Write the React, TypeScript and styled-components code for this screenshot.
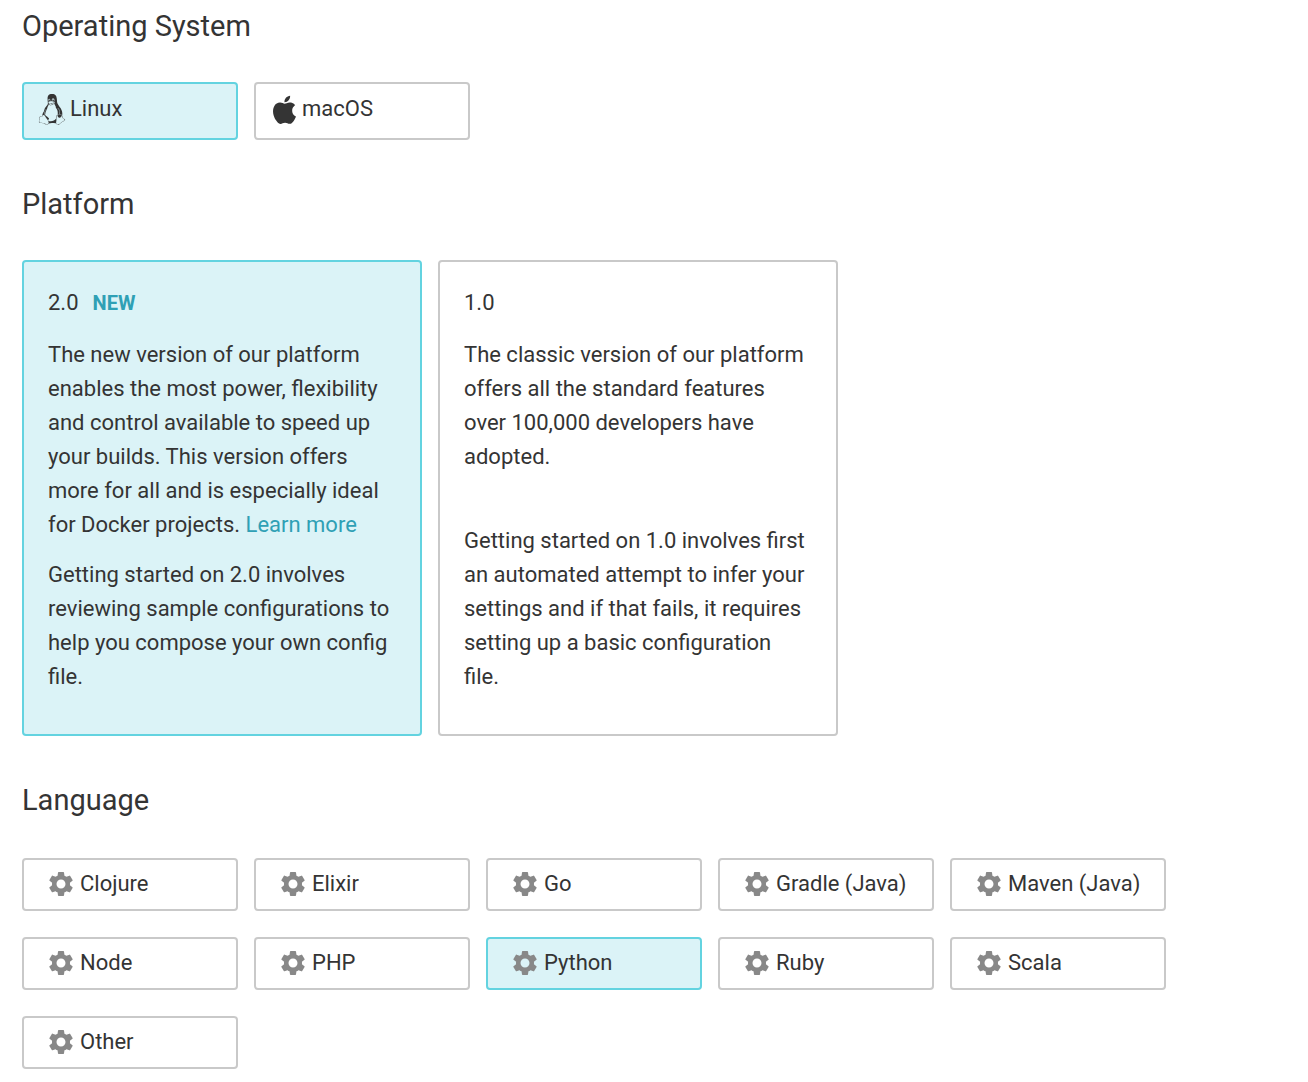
import React, { useState } from 'react';
import styled, { createGlobalStyle } from 'styled-components';
import { DiApple, DiLinux } from 'react-icons/di';
import { MdSettings } from 'react-icons/md';

const GlobalStyle = createGlobalStyle`
  *, *::before, *::after { box-sizing: border-box; }
  body {
    margin: 0;
    background: #fff;
    color: #343434;
    font-family: Roboto, "Liberation Sans", sans-serif;
    font-size: 22px;
    line-height: 34px;
  }
`;

const Page = styled.main`
  display: flex;
  flex-direction: column;
  gap: 44px;
  padding: 6px 22px 14px;
`;

const Section = styled.section<{ $gap?: number }>`
  display: flex;
  flex-direction: column;
  gap: ${(p) => p.$gap ?? 36}px;
`;

const Heading = styled.h2`
  margin: 0;
  font-size: 29px;
  font-weight: 400;
  line-height: 40px;
`;

const Grid = styled.div<{ $column: number }>`
  display: grid;
  grid-template-columns: repeat(auto-fill, ${(p) => p.$column}px);
  column-gap: 16px;
  row-gap: 26px;
`;

const Radio = styled.input`
  position: absolute;
  width: 1px;
  height: 1px;
  margin: 0;
  opacity: 0;
`;

const Option = styled.label`
  border: 2px solid #c9c9c9;
  border-radius: 4px;
  background: #fff;
  cursor: pointer;

  &:has(input:checked) {
    border-color: #63d3e0;
    background: #dbf3f7;
  }
`;

const SystemOption = styled(Option)`
  display: flex;
  align-items: center;
  height: 58px;
  padding: 0 10px 4px;
`;

const IconSlot = styled.span`
  display: flex;
  flex: none;
  align-items: center;
  justify-content: center;
  width: 36px;
`;

const LanguageOption = styled(Option)`
  display: flex;
  align-items: center;
  gap: 4px;
  height: 53px;
  padding: 0 10px 2px 22px;

  svg {
    flex: none;
    fill: #888;
  }
`;

const Card = styled(Option)`
  padding: 24px 28px 24px 24px;
`;

const CardTitle = styled.p`
  margin: 0 0 18px;
`;

const CardText = styled.p`
  margin: 0 0 16px;
`;

const Badge = styled.strong`
  margin-left: 14px;
  color: #2fa0b5;
  font-size: 20px;
  font-weight: 700;
`;

const Link = styled.a`
  color: #2fa0b5;
  text-decoration: none;
`;

const systems = [
  { name: 'Linux', Icon: DiLinux, size: 32 },
  { name: 'macOS', Icon: DiApple, size: 35 },
];

const languages = [
  'Clojure', 'Elixir', 'Go', 'Gradle (Java)', 'Maven (Java)',
  'Node', 'PHP', 'Python', 'Ruby', 'Scala', 'Other',
];

export default function App() {
  const [system, setSystem] = useState('Linux');
  const [platform, setPlatform] = useState('2.0');
  const [language, setLanguage] = useState('Python');

  return (
    <>
      <GlobalStyle />
      <Page>
        <Section aria-labelledby="system-title">
          <Heading id="system-title">Operating System</Heading>
          <Grid $column={216} role="radiogroup" aria-labelledby="system-title">
            {systems.map(({ name, Icon, size }) => (
              <SystemOption key={name}>
                <Radio type="radio" name="system" checked={system === name} onChange={() => setSystem(name)} />
                <IconSlot><Icon size={size} aria-hidden /></IconSlot>
                {name}
              </SystemOption>
            ))}
          </Grid>
        </Section>

        <Section aria-labelledby="platform-title">
          <Heading id="platform-title">Platform</Heading>
          <Grid $column={400} role="radiogroup" aria-labelledby="platform-title">
            <Card>
              <Radio type="radio" name="platform" checked={platform === '2.0'} onChange={() => setPlatform('2.0')} />
              <CardTitle>2.0<Badge>NEW</Badge></CardTitle>
              <CardText>
                The new version of our platform enables the most power, flexibility and control
                available to speed up your builds. This version offers more for all and is
                especially ideal for Docker projects. <Link href="#learn-more">Learn more</Link>
              </CardText>
              <CardText>
                Getting started on 2.0 involves reviewing sample configurations to help you compose
                your own config file.
              </CardText>
            </Card>
            <Card>
              <Radio type="radio" name="platform" checked={platform === '1.0'} onChange={() => setPlatform('1.0')} />
              <CardTitle>1.0</CardTitle>
              <CardText>
                The classic version of our platform offers all the standard features over 100,000
                developers have adopted.
              </CardText>
              <br />
              <CardText>
                Getting started on 1.0 involves first an automated attempt to infer your settings
                and if that fails, it requires setting up a basic configuration file.
              </CardText>
            </Card>
          </Grid>
        </Section>

        <Section $gap={38} aria-labelledby="language-title">
          <Heading id="language-title">Language</Heading>
          <Grid $column={216} role="radiogroup" aria-labelledby="language-title">
            {languages.map((name) => (
              <LanguageOption key={name}>
                <Radio type="radio" name="language" checked={language === name} onChange={() => setLanguage(name)} />
                <MdSettings size={30} aria-hidden />
                {name}
              </LanguageOption>
            ))}
          </Grid>
        </Section>
      </Page>
    </>
  );
}
